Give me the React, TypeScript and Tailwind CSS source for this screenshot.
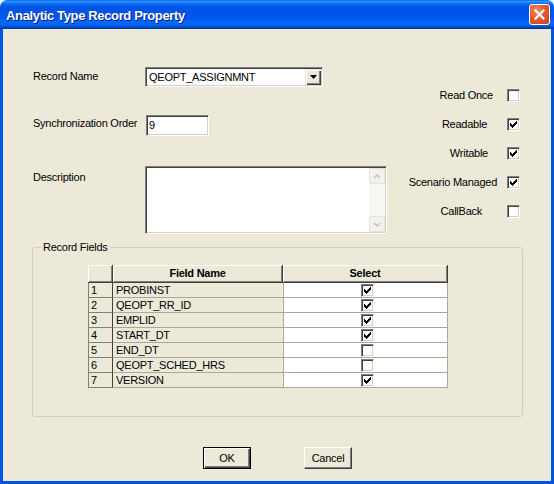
import React from 'react';

// classic 7x7 check glyph, pixel by pixel
const CHECK_PIXELS: [number, number][] = [
  [6, 0],
  [5, 1], [6, 1],
  [0, 2], [4, 2], [5, 2], [6, 2],
  [0, 3], [1, 3], [3, 3], [4, 3], [5, 3],
  [0, 4], [1, 4], [2, 4], [3, 4], [4, 4],
  [1, 5], [2, 5], [3, 5],
  [2, 6],
];

function CheckBox({ checked }: { checked: boolean }) {
  return (
    <span className="inline-flex w-[13px] h-[13px] shrink-0 items-center justify-center bg-white border border-t-[#808080] border-l-[#808080] border-b-white border-r-white shadow-[inset_1px_1px_0_#404040,inset_-1px_-1px_0_#D4D0C8]">
      {checked && (
        <svg width="7" height="7" viewBox="0 0 7 7" shapeRendering="crispEdges">
          {CHECK_PIXELS.map(([x, y], i) => (
            <rect key={i} x={x} y={y} width="1" height="1" fill="#000" />
          ))}
        </svg>
      )}
    </span>
  );
}

const flags = [
  { label: 'Read Once', checked: false, gap: 'mr-[14px]' },
  { label: 'Readable', checked: true, gap: 'mr-[20px]' },
  { label: 'Writable', checked: true, gap: 'mr-[19px]' },
  { label: 'Scenario Managed', checked: true, gap: 'mr-[10px]' },
  { label: 'CallBack', checked: false, gap: 'mr-[25px]' },
];

const fields = [
  { name: 'PROBINST', selected: true },
  { name: 'QEOPT_RR_ID', selected: true },
  { name: 'EMPLID', selected: true },
  { name: 'START_DT', selected: true },
  { name: 'END_DT', selected: false },
  { name: 'QEOPT_SCHED_HRS', selected: false },
  { name: 'VERSION', selected: true },
];

function TitleBar() {
  return (
    <div className="h-[29px] flex items-center justify-between pl-[6px] pr-[4px] rounded-t-[7px] bg-[linear-gradient(to_bottom,#0058EE_0%,#3593FF_4%,#288EFF_7%,#127DFF_10%,#036FFC_13%,#0262EE_17%,#0057E5_22%,#0054E3_28%,#0055EB_56%,#005BF5_66%,#026AFE_76%,#0062EF_86%,#0052D6_92%,#0040AB_96%,#003092_100%)]">
      <span className="text-white font-bold text-[13px] tracking-[-0.35px] [text-shadow:1px_1px_0_#0A1E7A] pt-px">
        Analytic Type Record Property
      </span>
      <div className="w-[21px] h-[21px] rounded-[3px] border border-white flex items-center justify-center bg-[radial-gradient(circle_at_35%_30%,#F08A68_0%,#E35B33_45%,#C7431B_100%)]">
        <svg width="11" height="11" viewBox="0 0 11 11">
          <path d="M1.5 1.5 L9.5 9.5 M9.5 1.5 L1.5 9.5" stroke="#fff" strokeWidth="2.2" strokeLinecap="square" />
        </svg>
      </div>
    </div>
  );
}

const sunken =
  'bg-white border border-t-[#808080] border-l-[#808080] border-b-white border-r-white shadow-[inset_1px_1px_0_#404040,inset_-1px_-1px_0_#D4D0C8]';

function ScrollButton({ up }: { up: boolean }) {
  return (
    <div className="w-[16px] h-[16px] flex items-center justify-center bg-[#F3F2EC] border border-[#E3E2DA] rounded-[2px]">
      <svg width="8" height="5" viewBox="0 0 8 5">
        <path d={up ? 'M1 4 L4 1 L7 4' : 'M1 1 L4 4 L7 1'} stroke="#C6C5BB" strokeWidth="1.6" fill="none" />
      </svg>
    </div>
  );
}

export default function App() {
  return (
    <div className="w-[554px] h-[484px] flex flex-col font-['Liberation_Sans',Arial,sans-serif] text-[11px] leading-[13px] tracking-[-0.25px] text-black select-none">
      <TitleBar />
      <div className="flex-1 flex flex-col bg-[#ECE9D8] border-x-[3px] border-b-[3px] border-[#0054E3]">
        {/* top form area */}
        <div className="flex">
          <div className="pl-[30px] pt-[38px] w-[400px]">
            <div className="flex items-start">
              <span className="w-[112px] pt-[3px]">Record Name</span>
              <div className={`w-[178px] h-[20px] flex items-center justify-between ${sunken}`}>
                <span className="pl-[3px]">QEOPT_ASSIGNMNT</span>
                <div className="w-[16px] h-[16px] mr-px flex items-center justify-center bg-[#ECE9D8] shadow-[inset_1px_1px_0_#ECE9D8,inset_2px_2px_0_#fff,inset_-1px_-1px_0_#404040,inset_-2px_-2px_0_#808080]">
                  <svg width="7" height="4" viewBox="0 0 7 4">
                    <path d="M0 0 H7 L3.5 4 Z" fill="#000" />
                  </svg>
                </div>
              </div>
            </div>
            <div className="flex items-start mt-[28px]">
              <span className="w-[113px] pt-[2px]">Synchronization Order</span>
              <div className={`w-[63px] h-[21px] flex items-center pl-[2px] ${sunken}`}>9</div>
            </div>
            <div className="flex items-start mt-[30px]">
              <span className="w-[112px] pt-[5px]">Description</span>
              <div className={`w-[242px] h-[68px] flex justify-end ${sunken}`}>
                <div className="w-[16px] mr-px my-px flex flex-col justify-between bg-[#F7F7F2]">
                  <ScrollButton up />
                  <ScrollButton up={false} />
                </div>
              </div>
            </div>
          </div>
          <div className="flex-1 flex flex-col items-end gap-[16px] pt-[60px] pr-[31px]">
            {flags.map((f) => (
              <div key={f.label} className="flex items-center h-[13px]">
                <span className={f.gap}>{f.label}</span>
                <CheckBox checked={f.checked} />
              </div>
            ))}
          </div>
        </div>

        {/* Record Fields group */}
        <div className="relative ml-[29px] mt-[13px] w-[491px] h-[170px] border border-[#D0D0BF] rounded-[3px]">
          <span className="absolute -top-[7px] left-[8px] px-[2px] bg-[#ECE9D8]">Record Fields</span>
          <table className="ml-[55px] mt-[17px] border-separate border-spacing-0 table-fixed w-[360px]">
            <colgroup>
              <col className="w-[25px]" />
              <col className="w-[170px]" />
              <col className="w-[165px]" />
            </colgroup>
            <thead>
              <tr className="h-[18px]">
                <th className="bg-[#ECE9D8] border-b border-r border-[#404040] shadow-[inset_1px_1px_0_#fff,inset_-1px_-1px_0_#808080]"></th>
                <th className="bg-[#ECE9D8] border-b border-r border-[#404040] shadow-[inset_1px_1px_0_#fff,inset_-1px_-1px_0_#808080] font-bold text-center">Field Name</th>
                <th className="bg-[#ECE9D8] border-b border-r border-[#404040] shadow-[inset_1px_1px_0_#fff,inset_-1px_-1px_0_#808080] font-bold text-center">Select</th>
              </tr>
            </thead>
            <tbody>
              {fields.map((f, i) => (
                <tr key={f.name} className="h-[15px]">
                  <td className="bg-[#ECE9D8] border-l border-b border-r border-l-[#808080] border-b-[#808080] border-r-[#404040] pl-[2px] p-0 leading-[13px]">{i + 1}</td>
                  <td className="bg-[#ECE9D8] border-b border-[#ACA899] pl-[3px] p-0 leading-[13px] whitespace-nowrap">{f.name}</td>
                  <td className="bg-white border-l border-b border-r border-[#ACA899] p-0">
                    <div className="flex justify-center pl-[4px] h-[13px] items-center">
                      <CheckBox checked={f.selected} />
                    </div>
                  </td>
                </tr>
              ))}
            </tbody>
          </table>
        </div>

        {/* buttons */}
        <div className="flex mt-[30px] ml-[200px] gap-[53px]">
          <button className="w-[48px] h-[22px] bg-[#ECE9D8] border border-black shadow-[inset_1px_1px_0_#fff,inset_-1px_-1px_0_#404040,inset_-2px_-2px_0_#808080] text-[11px]">
            OK
          </button>
          <button className="w-[48px] h-[22px] bg-[#ECE9D8] border border-t-white border-l-white border-b-[#404040] border-r-[#404040] shadow-[inset_-1px_-1px_0_#808080] text-[11px]">
            Cancel
          </button>
        </div>
      </div>
    </div>
  );
}
